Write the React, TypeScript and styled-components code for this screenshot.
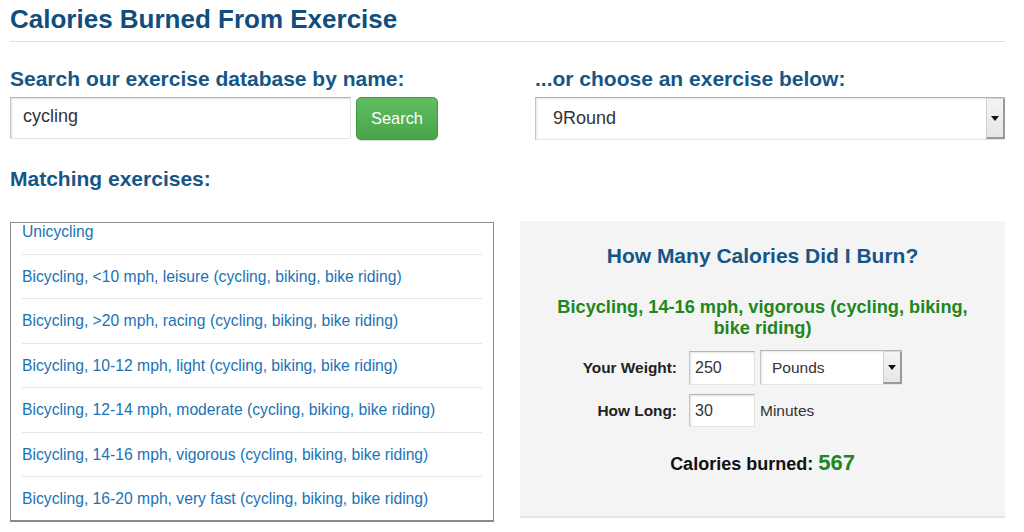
import React from "react";
import styled, { createGlobalStyle } from "styled-components";

const Global = createGlobalStyle`
  html, body { margin: 0; padding: 0; background: #fff; }
  body { font-family: "Liberation Sans", Arial, sans-serif; color: #333; }
  * { box-sizing: border-box; }
`;

const Page = styled.div`
  padding: 4px 19px 0 10px;
  width: 1024px;
`;

const Title = styled.h1`
  margin: 0;
  font-size: 26px;
  line-height: 30px;
  font-weight: bold;
  color: #0f4e7d;
  padding-bottom: 7px;
  border-bottom: 1px solid #dedede;
`;

const TopGrid = styled.div`
  display: grid;
  grid-template-columns: 1fr 470px;
  column-gap: 24px;
  margin-top: 25px;
`;

const Heading = styled.h2`
  margin: 0;
  font-size: 21px;
  line-height: 24px;
  font-weight: bold;
  color: #155686;
`;

const SearchRow = styled.div`
  display: flex;
  gap: 5px;
  margin-top: 6px;
  align-items: flex-start;
`;

const TextInput = styled.input<{ $w: number; $h: number; $fs: number; $pl: number }>`
  width: ${(p) => p.$w}px;
  height: ${(p) => p.$h}px;
  font-family: "Liberation Sans", Arial, sans-serif;
  font-size: ${(p) => p.$fs}px;
  color: #333;
  padding: 0 0 0 ${(p) => p.$pl}px;
  border: 1px solid #e4e4e4;
  border-top-color: #b4b4b4;
  border-left-color: #c4c4c4;
  box-shadow: inset 1px 1px 2px rgba(0, 0, 0, 0.12);
  background: #fff;
  outline: none;
`;

const SearchInput = styled(TextInput)`
  padding-bottom: 4px;
`;

const GreenButton = styled.button`
  width: 82px;
  height: 43px;
  border: 1px solid #3f9a3f;
  border-radius: 5px;
  background: linear-gradient(#62bd62, #48a548);
  color: #fff;
  font-family: "Liberation Sans", Arial, sans-serif;
  font-size: 16.4px;
  box-shadow: 0 1px 1px rgba(0, 0, 0, 0.15);
  padding: 0;
`;

const SelectBox = styled.div<{ $w: number; $h: number }>`
  display: flex;
  width: ${(p) => p.$w}px;
  height: ${(p) => p.$h}px;
  background: #fff;
  border-top: 1px solid #b4b4b4;
  border-left: 1px solid #c4c4c4;
  border-bottom: 1px solid #e4e4e4;
  box-shadow: inset 1px 1px 2px rgba(0, 0, 0, 0.1);
`;

const SelectText = styled.div<{ $fs: number; $pl: number }>`
  flex: 1;
  display: flex;
  align-items: center;
  padding-left: ${(p) => p.$pl}px;
  font-size: ${(p) => p.$fs}px;
  color: #333;
`;

const ArrowBox = styled.div<{ $w: number }>`
  width: ${(p) => p.$w}px;
  display: flex;
  align-items: center;
  justify-content: center;
  background: linear-gradient(#f4f4f4, #e6e6e6);
  border-left: 1px solid #cfcfcf;
  border-right: 2px solid #9a9a9a;
  border-bottom: 2px solid #9a9a9a;
  border-top: 1px solid #d6d6d6;
`;

const Triangle = styled.span`
  width: 0;
  height: 0;
  border-left: 4px solid transparent;
  border-right: 4px solid transparent;
  border-top: 5px solid #111;
`;

const MatchHeading = styled(Heading)`
  margin-top: 27px;
`;

const BottomGrid = styled.div`
  display: grid;
  grid-template-columns: 484px 1fr;
  column-gap: 26px;
  margin-top: 31px;
  align-items: start;
`;

const ListBox = styled.div`
  height: 300px;
  border: 1px solid #8a8a8a;
  border-bottom-width: 2px;
  overflow: hidden;
  padding: 0 11px;
`;

const ListInner = styled.ul`
  list-style: none;
  margin: -13px 0 0;
  padding: 0;
`;

const ListItem = styled.li`
  padding: 12px 0;
  border-bottom: 1px solid #e6e6e6;
  font-size: 15.7px;
  line-height: 19.5px;
  color: #1a73b6;
`;

const Panel = styled.div`
  background: #f4f4f4;
  padding: 23px 20px 39px;
  border-bottom: 2px solid #e4e4e4;
  margin-top: -1px;
`;

const PanelTitle = styled.h3`
  margin: 0;
  text-align: center;
  font-size: 21px;
  line-height: 24px;
  font-weight: bold;
  color: #155686;
`;

const ExerciseName = styled.div`
  margin: 29px auto 0;
  width: 430px;
  text-align: center;
  font-size: 18.2px;
  line-height: 21px;
  font-weight: bold;
  color: #218621;
`;

const Form = styled.div`
  display: grid;
  grid-template-columns: 169px 71px auto;
  row-gap: 9px;
  margin: 11px -20px 0;
  align-items: center;
`;

const Label = styled.div`
  text-align: right;
  padding-right: 12px;
  font-size: 15.4px;
  font-weight: bold;
  color: #222;
`;

const Unit = styled.div`
  font-size: 15.5px;
  color: #333;
`;

const Result = styled.div`
  margin-top: 23px;
  text-align: center;
  font-size: 18px;
  line-height: 26px;
  font-weight: bold;
  color: #111;
`;

const ResultValue = styled.span`
  font-size: 22px;
  color: #218621;
`;

const items = [
  "Unicycling",
  "Bicycling, <10 mph, leisure (cycling, biking, bike riding)",
  "Bicycling, >20 mph, racing (cycling, biking, bike riding)",
  "Bicycling, 10-12 mph, light (cycling, biking, bike riding)",
  "Bicycling, 12-14 mph, moderate (cycling, biking, bike riding)",
  "Bicycling, 14-16 mph, vigorous (cycling, biking, bike riding)",
  "Bicycling, 16-20 mph, very fast (cycling, biking, bike riding)",
];

export default function App() {
  return (
    <>
      <Global />
      <Page>
        <Title>Calories Burned From Exercise</Title>
        <TopGrid>
          <div>
            <Heading>Search our exercise database by name:</Heading>
            <SearchRow>
              <SearchInput $w={341} $h={42} $fs={18} $pl={12} defaultValue="cycling" />
              <GreenButton>Search</GreenButton>
            </SearchRow>
          </div>
          <div>
            <Heading>...or choose an exercise below:</Heading>
            <SearchRow>
              <SelectBox $w={470} $h={43}>
                <SelectText $fs={18} $pl={17}>9Round</SelectText>
                <ArrowBox $w={19}>
                  <Triangle />
                </ArrowBox>
              </SelectBox>
            </SearchRow>
          </div>
        </TopGrid>
        <MatchHeading>Matching exercises:</MatchHeading>
        <BottomGrid>
          <ListBox>
            <ListInner>
              {items.map((t) => (
                <ListItem key={t}>{t}</ListItem>
              ))}
            </ListInner>
          </ListBox>
          <Panel>
            <PanelTitle>How Many Calories Did I Burn?</PanelTitle>
            <ExerciseName>Bicycling, 14-16 mph, vigorous (cycling, biking, bike riding)</ExerciseName>
            <Form>
              <Label>Your Weight:</Label>
              <TextInput $w={66} $h={34} $fs={16} $pl={5} defaultValue="250" />
              <SelectBox $w={142} $h={35}>
                <SelectText $fs={15.5} $pl={11}>Pounds</SelectText>
                <ArrowBox $w={19}>
                  <Triangle />
                </ArrowBox>
              </SelectBox>
              <Label>How Long:</Label>
              <TextInput $w={66} $h={33} $fs={16} $pl={5} defaultValue="30" />
              <Unit>Minutes</Unit>
            </Form>
            <Result>
              Calories burned: <ResultValue>567</ResultValue>
            </Result>
          </Panel>
        </BottomGrid>
      </Page>
    </>
  );
}
